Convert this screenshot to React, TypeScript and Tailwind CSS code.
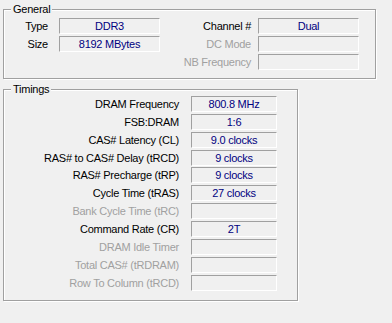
import React from "react";

const Box = ({ w, v }: { w: string; v?: string }) => (
  <div
    className={`${w} h-[16px] border-t border-l border-t-[#a0a0a0] border-l-[#a0a0a0] border-b border-r border-b-white border-r-white flex items-center justify-center text-[#000080] text-[11px] leading-[14px]`}
  >
    {v ?? ""}
  </div>
);

const timings: { label: string; value?: string; enabled: boolean; mt: string }[] = [
  { label: "DRAM Frequency", value: "800.8 MHz", enabled: true, mt: "mt-0" },
  { label: "FSB:DRAM", value: "1:6", enabled: true, mt: "mt-[2px]" },
  { label: "CAS# Latency (CL)", value: "9.0 clocks", enabled: true, mt: "mt-[2px]" },
  { label: "RAS# to CAS# Delay (tRCD)", value: "9 clocks", enabled: true, mt: "mt-[2px]" },
  { label: "RAS# Precharge (tRP)", value: "9 clocks", enabled: true, mt: "mt-[1px]" },
  { label: "Cycle Time (tRAS)", value: "27 clocks", enabled: true, mt: "mt-[2px]" },
  { label: "Bank Cycle Time (tRC)", enabled: false, mt: "mt-[2px]" },
  { label: "Command Rate (CR)", value: "2T", enabled: true, mt: "mt-[2px]" },
  { label: "DRAM Idle Timer", enabled: false, mt: "mt-[2px]" },
  { label: "Total CAS# (tRDRAM)", enabled: false, mt: "mt-[2px]" },
  { label: "Row To Column (tRCD)", enabled: false, mt: "mt-[2px]" },
];

export default function App() {
  return (
    <div
      className="w-[392px] h-[323px] bg-[#f0f0f0] overflow-hidden pt-[9px] pl-[3px] text-[11px] text-black tracking-[-0.25px]"
      style={{ fontFamily: '"Liberation Sans", Arial, sans-serif' }}
    >
      {/* General */}
      <div className="relative w-[373px] h-[70px] border border-[#a0a0a0] shadow-[1px_1px_0_#fff,inset_1px_1px_0_#fff] pt-[8px]">
        <span className="absolute left-[7px] top-[-8px] px-[2px] bg-[#f0f0f0] leading-[14px] text-[11px]">
          General
        </span>
        <div className="flex">
          <div className="flex flex-col gap-[2px]">
            <div className="flex items-center">
              <div className="w-[44px] text-right leading-[16px]">Type</div>
              <div className="ml-[11px]">
                <Box w="w-[101px]" v="DDR3" />
              </div>
            </div>
            <div className="flex items-center">
              <div className="w-[44px] text-right leading-[16px]">Size</div>
              <div className="ml-[11px]">
                <Box w="w-[101px]" v="8192 MBytes" />
              </div>
            </div>
          </div>
          <div className="flex flex-col gap-[2px] ml-[10px]">
            <div className="flex items-center">
              <div className="w-[81px] text-right leading-[16px]">Channel #</div>
              <div className="ml-[7px]">
                <Box w="w-[101px]" v="Dual" />
              </div>
            </div>
            <div className="flex items-center">
              <div className="w-[81px] text-right leading-[16px] text-[#a0a0a0]">DC Mode</div>
              <div className="ml-[7px]">
                <Box w="w-[101px]" />
              </div>
            </div>
            <div className="flex items-center">
              <div className="w-[81px] text-right leading-[16px] text-[#a0a0a0] whitespace-nowrap">
                NB Frequency
              </div>
              <div className="ml-[7px]">
                <Box w="w-[101px]" />
              </div>
            </div>
          </div>
        </div>
      </div>

      {/* Timings */}
      <div className="relative mt-[10px] w-[295px] h-[212px] border border-[#a0a0a0] shadow-[1px_1px_0_#fff,inset_1px_1px_0_#fff] pt-[6px]">
        <span className="absolute left-[7px] top-[-8px] px-[2px] bg-[#f0f0f0] leading-[14px] text-[11px]">
          Timings
        </span>
        <div className="flex flex-col">
          {timings.map((t) => (
            <div key={t.label} className={`flex items-center ${t.mt}`}>
              <div
                className={`w-[175px] text-right leading-[16px] whitespace-nowrap ${
                  t.enabled ? "text-black" : "text-[#a0a0a0]"
                }`}
              >
                {t.label}
              </div>
              <div className="ml-[12px]">
                <Box w="w-[86px]" v={t.value} />
              </div>
            </div>
          ))}
        </div>
      </div>
    </div>
  );
}
